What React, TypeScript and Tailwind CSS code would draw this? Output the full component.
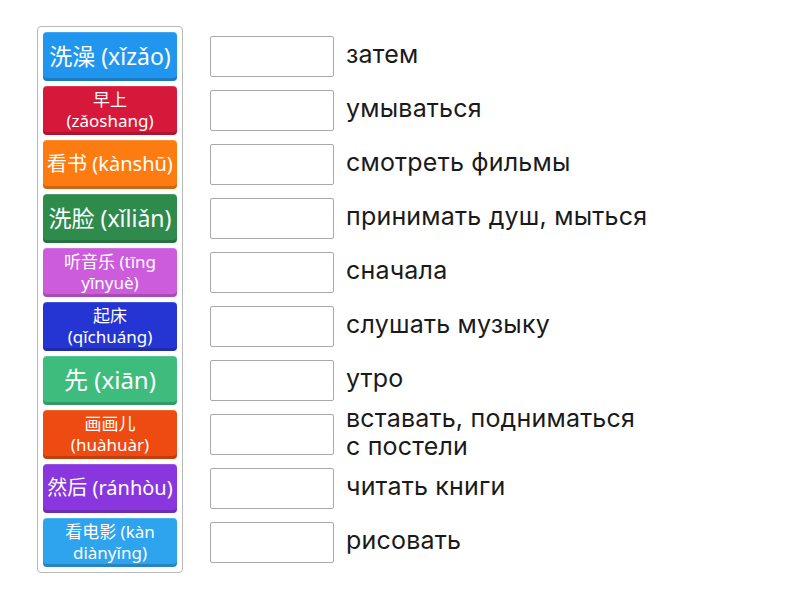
const tiles: { lines: string[]; bg: string; size?: string }[] = [
  { lines: ["洗澡 (xǐzǎo)"], bg: "bg-[#2196ee]", size: "text-[23px]" },
  { lines: ["早上", "(zǎoshang)"], bg: "bg-[#d6193a]" },
  { lines: ["看书 (kànshū)"], bg: "bg-[#fd7c12]", size: "text-[20px]" },
  { lines: ["洗脸 (xǐliǎn)"], bg: "bg-[#2e8b4c]", size: "text-[23px]" },
  { lines: ["听音乐 (tīng", "yīnyuè)"], bg: "bg-[#cd5cdd]" },
  { lines: ["起床", "(qǐchuáng)"], bg: "bg-[#2535d3]" },
  { lines: ["先 (xiān)"], bg: "bg-[#3ebc7e]", size: "text-[24px]" },
  { lines: ["画画儿", "(huàhuàr)"], bg: "bg-[#ee4b12]" },
  { lines: ["然后 (ránhòu)"], bg: "bg-[#8a36de]", size: "text-[20px]" },
  { lines: ["看电影 (kàn", "diànyǐng)"], bg: "bg-[#2ea3ee]" },
];

const words = [
  "затем",
  "умываться",
  "смотреть фильмы",
  "принимать душ, мыться",
  "сначала",
  "слушать музыку",
  "утро",
  "вставать, подниматься с постели",
  "читать книги",
  "рисовать",
];

function Tile({ lines, bg, size }: { lines: string[]; bg: string; size?: string }) {
  const big = lines.length === 1;
  return (
    <div
      className={`${bg} flex h-[49px] w-[134px] flex-col items-center justify-center whitespace-nowrap rounded-[4px] pb-[2px] text-center text-white shadow-[inset_0_-3px_0_rgba(0,0,0,0.18),inset_0_1px_0_rgba(255,255,255,0.15)] ${
        big ? `${size} leading-[28px]` : "text-[17px] leading-[21px]"
      }`}
      style={{ fontFamily: '"Noto Sans", "Noto Sans CJK SC", sans-serif' }}
    >
      {lines.map((l) => (
        <span key={l}>{l}</span>
      ))}
    </div>
  );
}

export default function App() {
  return (
    <div className="flex h-[600px] w-[800px] items-start bg-white pl-[37px] pt-[26px]">
      <div className="flex w-[146px] flex-col gap-[5px] rounded-[4px] border border-[#b8b8b8] px-[5px] py-[5px]">
        {tiles.map((t) => (
          <Tile key={t.lines.join()} {...t} />
        ))}
      </div>

      <div className="ml-[27px] mt-[10px] flex flex-col gap-[13px]">
        {words.map((w) => (
          <div key={w} className="flex h-[41px] items-center">
            <div className="h-[41px] w-[124px] shrink-0 rounded-[2px] border border-[#a9a9a9] bg-white" />
            <div
              className="mb-[5px] ml-[12px] w-[306px] text-[25px] leading-[28px] tracking-[0.2px] text-[#1a1a1a]"
              style={{ fontFamily: "Inter, sans-serif" }}
            >
              {w}
            </div>
          </div>
        ))}
      </div>
    </div>
  );
}
